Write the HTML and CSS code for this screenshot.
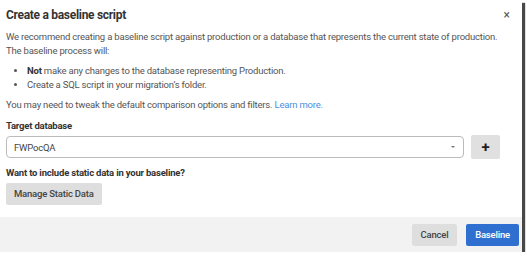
FILE: index.html
```html
<!DOCTYPE html>
<html>
  <head>
    <meta charset="utf-8"/>
    <title>Create a baseline script</title>
    <link rel="stylesheet" href="styles.css">
  </head>
  <body>
  <div class="dialog">
    <div class="dialog_body">
      <div class="header">
        <h1 class="title">Create a baseline script</h1>
        <span class="close">&times;</span>
      </div>

      <p class="text">We recommend creating a baseline script against production or a database that represents the current state of production. The baseline process will:</p>
      <ul class="steps">
        <li><b>Not</b> make any changes to the database representing Production.</li>
        <li>Create a SQL script in your migration’s folder.</li>
      </ul>
      <p class="text">You may need to tweak the default comparison options and filters. <a class="link" href="#">Learn more.</a></p>

      <div class="label">Target database</div>
      <div class="target_row">
        <div class="select">
          <span>FWPocQA</span>
          <span class="caret"></span>
        </div>
        <button class="btn btn_add">+</button>
      </div>

      <div class="label">Want to include static data in your baseline?</div>
      <button class="btn btn_grey">Manage Static Data</button>
    </div>

    <div class="footer">
      <button class="btn btn_grey btn_cancel">Cancel</button>
      <button class="btn btn_primary">Baseline</button>
    </div>
  </div>
  </body>
</html>
```

FILE: styles.css
```css
body { margin: 0; background: #fff; font-family: Roboto, "Liberation Sans", sans-serif; }

.dialog {
  width: 522px;
  height: 252px;
  background: #fff;
  display: flex;
  flex-direction: column;
  box-shadow: 3px 3px 1px rgba(40, 40, 40, 0.85);
}

.dialog_body { flex: 1; padding: 0 6px; }

.header { display: flex; align-items: center; justify-content: space-between; height: 30px; }
.title { font-size: 12px; letter-spacing: -0.3px; font-weight: bold; color: #333; margin: 0; }
.close { font-size: 12px; color: #555; margin-right: 6px; }

.text { max-width: 500px; font-size: 9.5px; letter-spacing: -0.2px; color: #555; line-height: 14px; margin: 0 0 6px 0; }
.steps { font-size: 9.5px; letter-spacing: -0.2px; color: #555; line-height: 14px; margin: 0 0 6px 0; padding-left: 21px; }
.steps b { color: #333; }
.link { color: #4a8fdf; text-decoration: none; }

.label { font-size: 9.5px; letter-spacing: -0.2px; font-weight: bold; color: #333; margin: 8px 0 4px 0; }

.target_row { display: flex; align-items: center; gap: 7px; margin-bottom: 5px; }
.select {
  width: 458px;
  height: 22px;
  box-sizing: border-box;
  border: 1px solid #bbb;
  border-radius: 4px;
  display: flex;
  align-items: center;
  justify-content: space-between;
  padding: 0 8px 0 7px;
  font-size: 9.5px;
  letter-spacing: -0.2px;
  color: #444;
}
.caret { width: 0; height: 0; border-left: 2px solid transparent; border-right: 2px solid transparent; border-top: 2px solid #777; }

.btn {
  font-family: Roboto, "Liberation Sans", sans-serif;
  font-size: 9.5px;
  letter-spacing: -0.2px;
  border: none;
  border-radius: 2px;
  height: 22px;
  padding: 0 8px;
  color: #444;
  cursor: pointer;
}
.btn_add { width: 29px; height: 24px; font-size: 15px; font-weight: bold; background: #e0e0e0; color: #222; padding: 0; }
.btn_grey { background: #dedede; font-weight: 500; }
.btn_primary { background: #2f6fd0; color: #fff; font-weight: 500; width: 53px; padding: 0; }
.btn_cancel { width: 45px; padding: 0; }

.footer {
  height: 35px;
  background: #f2f2f2;
  display: flex;
  align-items: center;
  justify-content: flex-end;
  gap: 9px;
  padding: 0 3px;
}
```
